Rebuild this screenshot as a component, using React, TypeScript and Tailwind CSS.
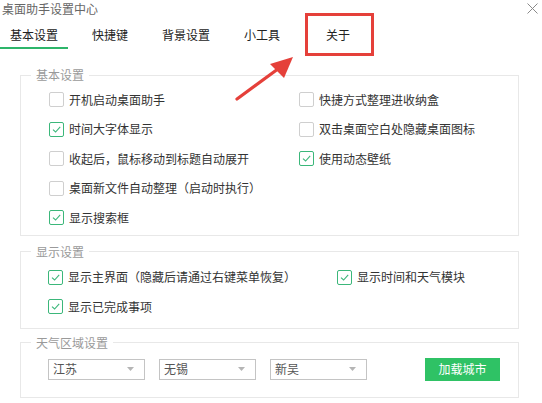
import { type ReactNode } from 'react'

const font = { fontFamily: '"Noto Sans CJK SC", "Microsoft YaHei", sans-serif' }

function Check({ checked, label }: { checked?: boolean; label: string }) {
  return (
    <div className="flex h-[29.5px] items-center">
      <span
        className={
          'flex h-[15px] w-[15px] shrink-0 items-center justify-center rounded-[2px] border bg-white ' +
          (checked ? 'border-[#3bb77a]' : 'border-[#cfcfcf]')
        }
      >
        {checked && (
          <svg width="11" height="11" viewBox="0 0 11 11">
            <path d="M2 5.6 L4.6 8 L9.2 2.8" fill="none" stroke="#3bb77a" strokeWidth="1.1" />
          </svg>
        )}
      </span>
      <span className="ml-[5px] whitespace-nowrap text-[12px] leading-4 text-[#333]">{label}</span>
    </div>
  )
}

function Group({ title, children, className }: { title: string; children: ReactNode; className?: string }) {
  return (
    <fieldset className={'mr-[23px] ml-[20px] border border-[#e8e8e8] ' + (className ?? '')}>
      <legend className="ml-[10px] px-[5px] text-[12px] leading-4 text-[#9a9a9a]">{title}</legend>
      {children}
    </fieldset>
  )
}

function Select({ value }: { value: string }) {
  return (
    <div className="flex h-[21px] w-[97px] items-center justify-between border border-[#c4c4c4] bg-white pr-[10px] pl-[4px]">
      <span className="text-[12px] leading-4 text-[#555]">{value}</span>
      <svg width="7" height="4" viewBox="0 0 7 4">
        <path d="M0 0 H7 L3.5 4 Z" fill="#b5b5b5" />
      </svg>
    </div>
  )
}

const tabs = ['基本设置', '快捷键', '背景设置', '小工具', '关于']

export default function App() {
  return (
    <div className="relative h-[403px] w-[542px] overflow-hidden bg-white" style={font}>
      {/* title bar */}
      <div className="flex h-[22px] items-start justify-between pt-[1px] pl-[2px]">
        <span className="text-[12px] leading-4 text-[#666]">桌面助手设置中心</span>
        <svg className="mt-[2px] mr-[4px]" width="11" height="11" viewBox="0 0 11 11">
          <path d="M0.5 0.5 L10.5 10.5 M10.5 0.5 L0.5 10.5" stroke="#8a8a8a" strokeWidth="1" />
        </svg>
      </div>

      {/* tabs */}
      <div className="flex h-[27px] gap-2">
        {tabs.map((t, i) => (
          <div
            key={t}
            className={
              'flex w-[68px] items-center justify-center border-b-2 text-[12px] leading-4 text-[#222] ' +
              (i === 0 ? 'border-[#2db56a]' : 'border-transparent')
            }
          >
            {t}
          </div>
        ))}
      </div>

      <Group title="基本设置" className="mt-[18px] pt-[2px] pb-[2px]">
        <div className="grid grid-cols-[250px_1fr] pl-[28px]">
          <div>
            <Check label="开机启动桌面助手" />
            <Check checked label="时间大字体显示" />
            <Check label="收起后，鼠标移动到标题自动展开" />
            <Check label="桌面新文件自动整理（启动时执行）" />
            <Check checked label="显示搜索框" />
          </div>
          <div>
            <Check label="快捷方式整理进收纳盒" />
            <Check label="双击桌面空白处隐藏桌面图标" />
            <Check checked label="使用动态壁纸" />
          </div>
        </div>
      </Group>

      <Group title="显示设置" className="mt-[8px] pt-[3px] pb-[6px]">
        <div className="grid grid-cols-[289px_1fr] pl-[27px]">
          <Check checked label="显示主界面（隐藏后请通过右键菜单恢复）" />
          <Check checked label="显示时间和天气模块" />
          <Check checked label="显示已完成事项" />
        </div>
      </Group>

      <Group title="天气区域设置" className="mt-[6px] pt-[7px] pb-[16px]">
        <div className="flex items-center pl-[27px]">
          <div className="flex gap-[14px]">
            <Select value="江苏" />
            <Select value="无锡" />
            <Select value="新吴" />
          </div>
          <button className="ml-[58px] h-[23px] w-[75px] bg-[#2fc265] text-[12px] leading-4 text-white">
            加载城市
          </button>
        </div>
      </Group>

      {/* annotation overlay */}
      <div className="absolute top-[13px] left-[305px] h-[43px] w-[69px] border-[3px] border-[#e5403a]" />
      <svg className="absolute top-0 left-0" width="542" height="403" viewBox="0 0 542 403">
        <path d="M237 99 L282 66" stroke="#e5403a" strokeWidth="3.2" strokeLinecap="round" />
        <path d="M293 57 L270 64 L284 78 Z" fill="#e5403a" />
      </svg>
    </div>
  )
}
